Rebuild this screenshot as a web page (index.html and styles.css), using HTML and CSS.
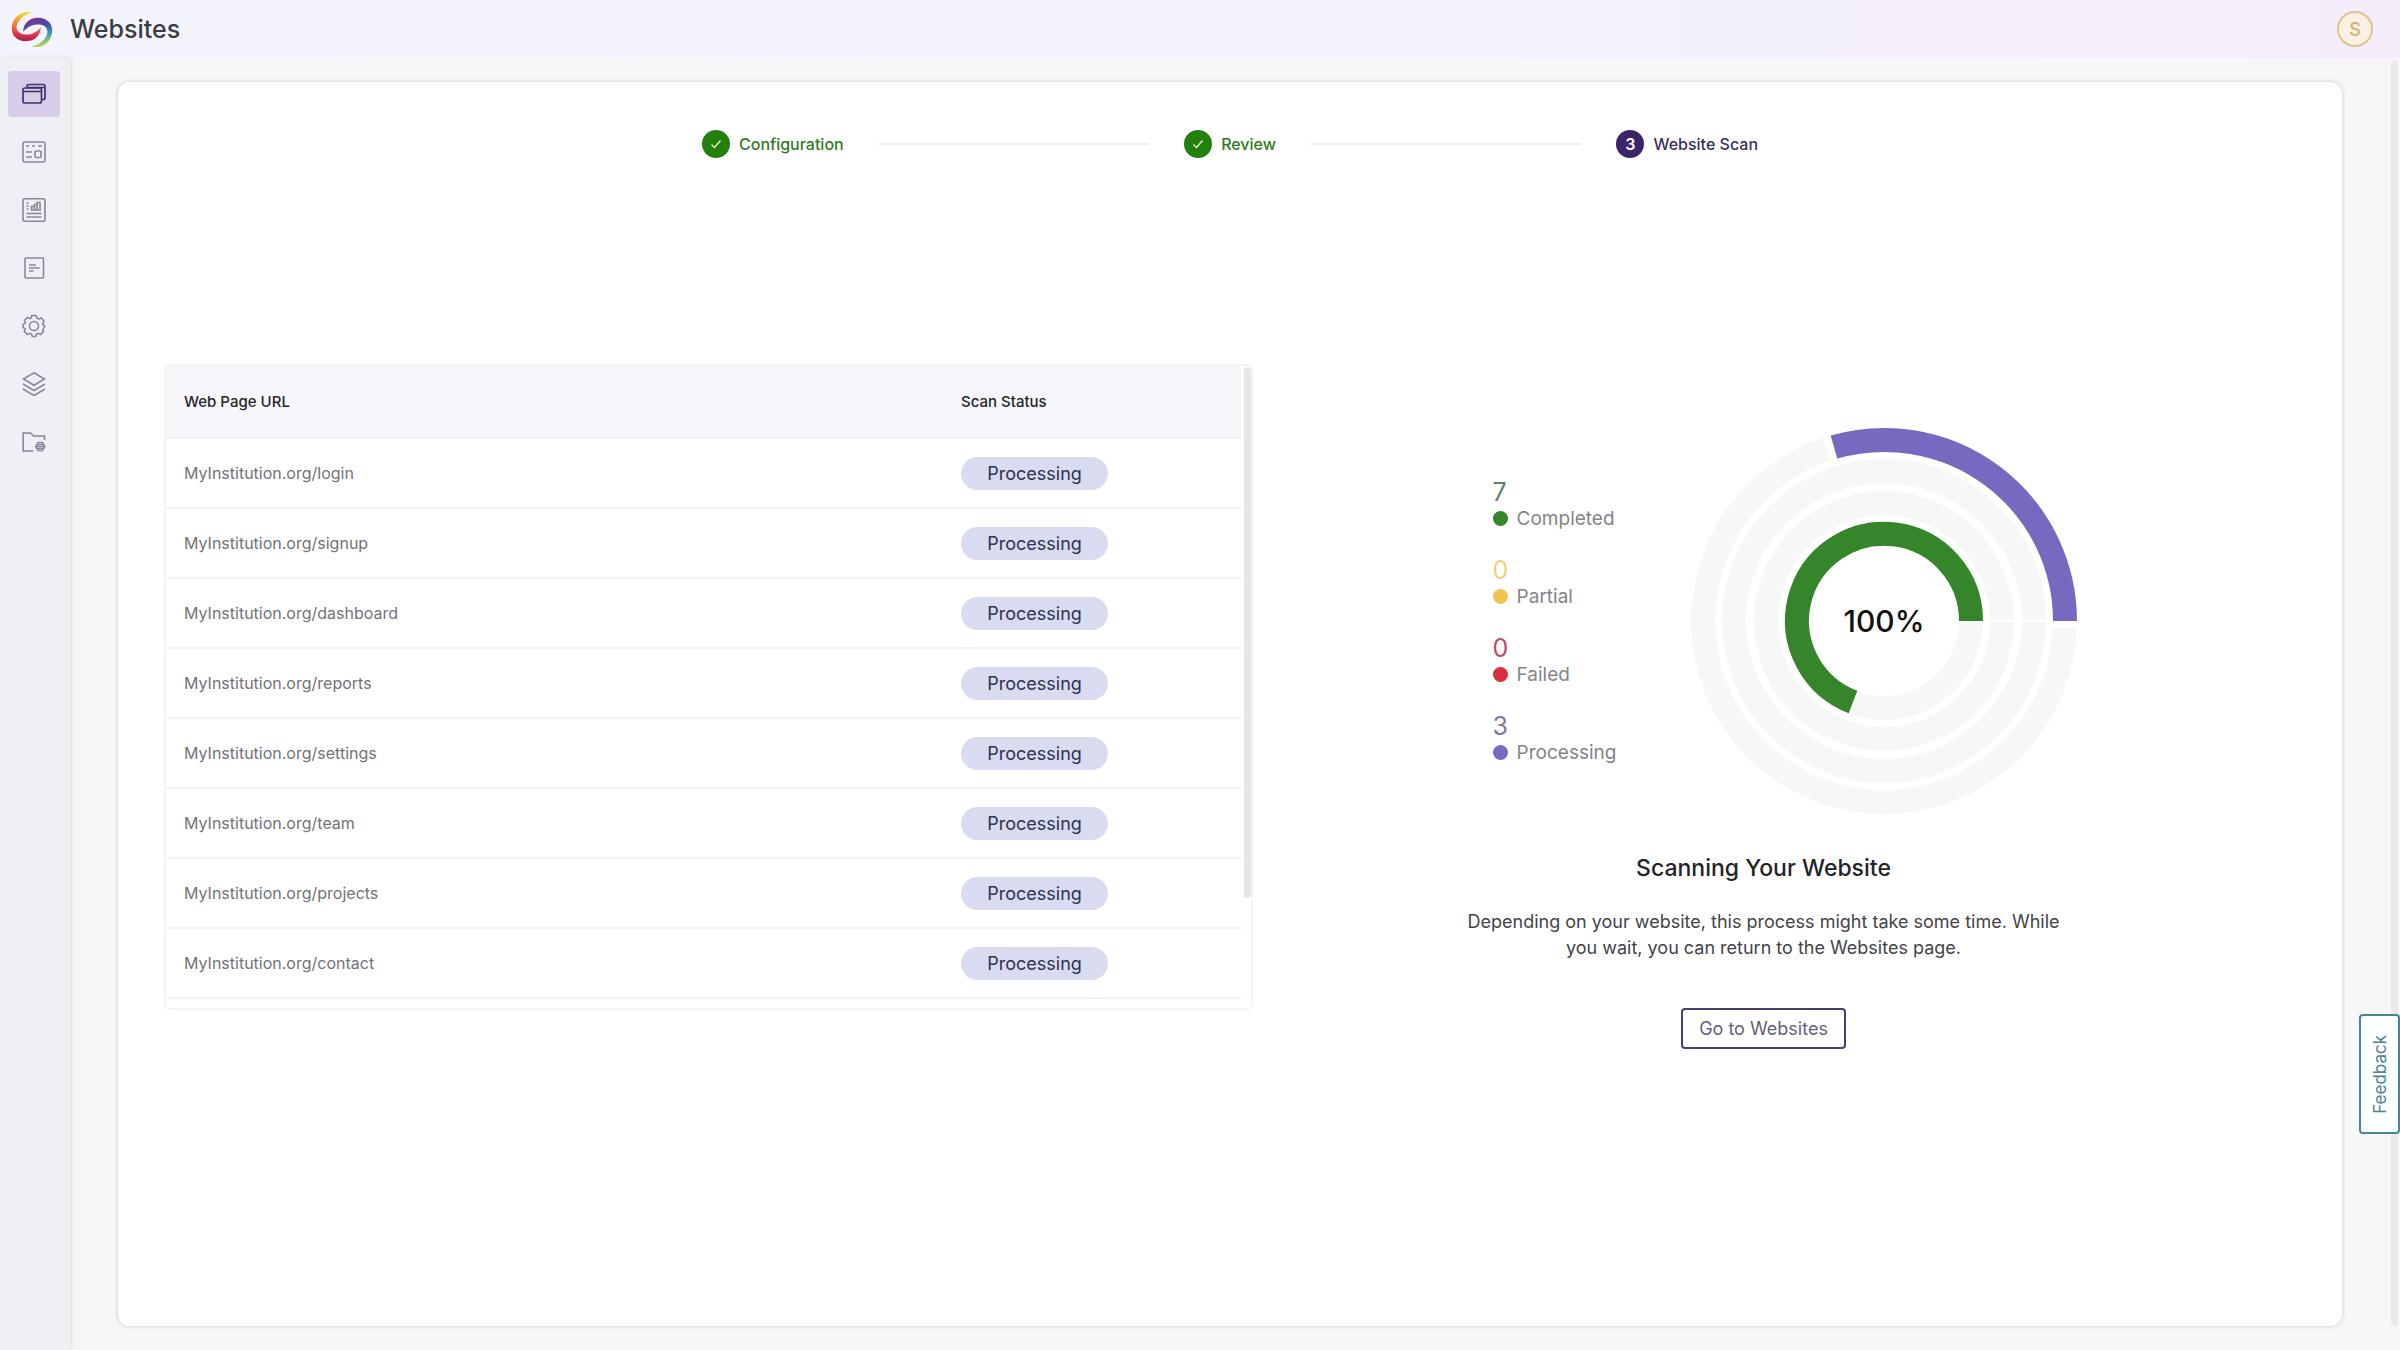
FILE: index.html
```html
<!DOCTYPE html>
<html lang="en">
<head>
    <meta charset="UTF-8">
    <meta name="viewport" content="width=device-width, initial-scale=1.0">
    <title>Websites</title>
    <link rel="stylesheet" href="styles.css">
</head>
<body>
<header class="topbar">
    <svg class="logo" viewBox="34 34 126 110" aria-hidden="true">
        <defs>
            <linearGradient id="warm" gradientUnits="userSpaceOnUse" x1="90" y1="36" x2="84" y2="124">
                <stop offset="0" stop-color="#f6dc3c"/>
                <stop offset="0.5" stop-color="#ee7a35"/>
                <stop offset="0.8" stop-color="#d8304a"/>
                <stop offset="1" stop-color="#a02450"/>
            </linearGradient>
            <linearGradient id="cool" gradientUnits="userSpaceOnUse" x1="90" y1="52" x2="116" y2="140">
                <stop offset="0" stop-color="#8c2d90"/>
                <stop offset="0.4" stop-color="#3f4fa8"/>
                <stop offset="0.7" stop-color="#3aa0c4"/>
                <stop offset="1" stop-color="#b4d84a"/>
            </linearGradient>
        </defs>
        <path fill="url(#warm)" d="M98 38C60 28 32 60 37 92C40 118 70 132 100 120C116 112 124 98 123 82C112 98 90 108 70 103C50 98 46 82 56 66C66 50 82 41 98 38Z"/>
        <path fill="url(#cool)" d="M96 140C134 150 162 118 157 86C154 60 124 46 94 58C78 66 70 80 71 96C82 80 104 70 124 75C144 80 148 96 138 112C128 128 112 137 96 140Z"/>
    </svg>
    <h1>Websites</h1>
    <button class="avatar" type="button" aria-label="Account">S</button>
</header>
<div class="page">
    <nav class="sidebar" aria-label="Main">
        <a class="nav-item active" href="#" aria-label="Websites">
            <svg viewBox="0 0 24 24"><path d="M5 5V4.500Q5 2.500 7 2.500H21Q23 2.500 23 4.500V15.500Q23 17.500 21 17.500H20M1 9.500H20M5 5.500H22"/><rect x="1" y="6" width="18.500" height="15" rx="2"/></svg>
        </a>
        <a class="nav-item" href="#" aria-label="Pages">
            <svg viewBox="0 0 24 24"><rect x="1" y="2" width="22" height="20" rx="2"/><path d="M4 6H7M10 6H13M16 6H20M4 12H10M4 17H10"/><rect x="13" y="11" width="6" height="6.500" rx="1"/></svg>
        </a>
        <a class="nav-item" href="#" aria-label="Reports">
            <svg viewBox="0 0 24 24"><rect x="1" y="0.800" width="22" height="22.400" rx="2"/><path d="M4.500 5H6.500M4.500 8H6.500M4.500 11H6.500M4.500 15.500H19.500M4.500 19H19.500M9.500 12V8.500H12.500V12M12.500 8.500V6.500H15V12M15 6V4.500H18V12M9 12H19"/></svg>
        </a>
        <a class="nav-item" href="#" aria-label="Documents">
            <svg viewBox="0 0 24 24"><rect x="3" y="2" width="18.500" height="20" rx="1"/><path d="M7 9H14M7 12H17.500M7 15H11.500"/></svg>
        </a>
        <a class="nav-item" href="#" aria-label="Settings">
            <svg viewBox="0 0 24 24"><path d="M9.800 1.500H14.200L15 4.200L17 5.100L19.300 3.800L22 7.500L20.600 9.600L21 11L22.800 12L21 15.500L21.500 17.500L18.500 20.500L16 19.300L14.500 20L13.800 22.500H10.200L9.500 20L8 19.300L5.500 20.500L2.500 17.500L3.400 15L1.200 13.500V10.500L3.400 9L2.500 6.500L5.500 3.500L8 4.700L9.200 4Z"/><circle cx="12" cy="12" r="4.500"/></svg>
        </a>
        <a class="nav-item" href="#" aria-label="Layers">
            <svg viewBox="0 0 24 24"><path d="M12 0.800L22.500 7L12 13.200L1.500 7ZM1 12L12 18.500L23 12M1 17L12 23.500L23 17"/></svg>
        </a>
        <a class="nav-item" href="#" aria-label="Folder settings">
            <svg viewBox="0 0 24 24"><path d="M11.500 21H1.200V3H8.500L11.500 6H22.500V10"/><path d="M16 12.500H20.500L22.800 16.500L20.500 20.500H16L13.700 16.500Z"/><path d="M14 16.500H22.500M15.500 14.500H21M15.500 18.500H21"/></svg>
        </a>
    </nav>
    <main class="content">
        <section class="card">
            <ol class="stepper">
                <li class="step done">
                    <span class="step-icon"><svg viewBox="0 0 14 14"><path d="M2.500 7.500L5.500 10.500L11.500 3.500"/></svg></span>
                    Configuration
                </li>
                <li class="step-line" aria-hidden="true"></li>
                <li class="step done">
                    <span class="step-icon"><svg viewBox="0 0 14 14"><path d="M2.500 7.500L5.500 10.500L11.500 3.500"/></svg></span>
                    Review
                </li>
                <li class="step-line" aria-hidden="true"></li>
                <li class="step current">
                    <span class="step-icon">3</span>
                    Website Scan
                </li>
            </ol>
            <div class="panels">
                <div class="table-box">
                    <table class="scan-table">
                        <thead>
                            <tr><th scope="col">Web Page URL</th><th scope="col">Scan Status</th></tr>
                        </thead>
                        <tbody>
                            <tr><td>MyInstitution.org/login</td><td><span class="pill">Processing</span></td></tr>
                            <tr><td>MyInstitution.org/signup</td><td><span class="pill">Processing</span></td></tr>
                            <tr><td>MyInstitution.org/dashboard</td><td><span class="pill">Processing</span></td></tr>
                            <tr><td>MyInstitution.org/reports</td><td><span class="pill">Processing</span></td></tr>
                            <tr><td>MyInstitution.org/settings</td><td><span class="pill">Processing</span></td></tr>
                            <tr><td>MyInstitution.org/team</td><td><span class="pill">Processing</span></td></tr>
                            <tr><td>MyInstitution.org/projects</td><td><span class="pill">Processing</span></td></tr>
                            <tr><td>MyInstitution.org/contact</td><td><span class="pill">Processing</span></td></tr>
                        </tbody>
                    </table>
                    <div class="table-scroll"></div>
                </div>
                <div class="scan-panel">
                    <div class="scan-summary">
                        <ul class="legend">
                            <li class="completed"><strong>7</strong><span>Completed</span></li>
                            <li class="partial"><strong>0</strong><span>Partial</span></li>
                            <li class="failed"><strong>0</strong><span>Failed</span></li>
                            <li class="processing"><strong>3</strong><span>Processing</span></li>
                        </ul>
                        <svg class="chart" viewBox="-194 -194 388 388" role="img" aria-label="Scan progress 100%">
                            <!-- tracks -->
                            <g class="track">
                                <circle r="181"/>
                                <circle r="150"/>
                                <circle r="118"/>
                                <circle r="87"/>
                            </g>
                            <path class="gap" d="M74 0H196"/>
                            <path class="gap wide" d="M168 3H196M-51 -162L-58 -186M-32 79L-40 97"/>
                            <!-- values -->
                            <path class="arc-processing" d="M181 0A181 181 0 0 0 -50 -174"/>
                            <path class="arc-completed" d="M87 0A87 87 0 1 0 -31 81"/>
                            <text y="11">100%</text>
                        </svg>
                    </div>
                    <h2>Scanning Your Website</h2>
                    <p>Depending on your website, this process might take some time. While you wait, you can return to the Websites page.</p>
                    <button class="back-button" type="button">Go to Websites</button>
                </div>
            </div>
        </section>
    </main>
    <div class="page-scroll"></div>
</div>
<button class="feedback" type="button">Feedback</button>
</body>
</html>
```

FILE: styles.css
```css
* {
    box-sizing: border-box;
}

body {
    margin: 0;
    min-height: 100vh;
    display: flex;
    flex-direction: column;
    font-family: Inter, "Liberation Sans", sans-serif;
    font-size: 18px;
    color: #444448;
    background-color: #f7f7f8;
}

button {
    font-family: inherit;
    cursor: pointer;
}

h1, h2, p, ul, ol {
    margin: 0;
    padding: 0;
}

ul, ol {
    list-style-type: none;
}

.topbar {
    display: flex;
    align-items: center;
    height: 58px;
    padding: 0 27px 0 11px;
    background: linear-gradient(90deg, #f3f4fd, #f4f2fc 60%, #f4ecfa);
}

.topbar h1 {
    margin-left: 17px;
    font-size: 25px;
    font-weight: 500;
    color: #3c3c44;
}

.logo {
    width: 42px;
    height: 37px;
}

.avatar {
    width: 36px;
    height: 36px;
    margin-left: auto;
    padding: 0;
    border: 2px solid #dcc58c;
    border-radius: 50%;
    background-color: #fcf0e4;
    color: #d4b46a;
    font-size: 18px;
    font-weight: 500;
}

.page {
    flex: 1;
    display: flex;
}

.sidebar {
    display: flex;
    flex-direction: column;
    align-items: center;
    gap: 12px;
    width: 70px;
    padding: 13px 2px 0 0;
    background-color: #eff0f6;
    box-shadow: 1px 0 5px rgba(0, 0, 0, 0.12);
}

.nav-item {
    display: flex;
    align-items: center;
    justify-content: center;
    width: 52px;
    height: 46px;
    border-radius: 4px;
}

.nav-item svg {
    width: 24px;
    height: 24px;
    fill: none;
    stroke: #8a869c;
    stroke-width: 1.6;
}

.nav-item.active {
    background-color: #d7cde8;
}

.nav-item.active svg {
    stroke: #43306e;
    stroke-width: 1.7;
}

.content {
    flex: 1;
    display: flex;
    padding: 24px 49px 24px 48px;
}

.card {
    flex: 1;
    padding: 48px 46px;
    border-radius: 12px;
    background-color: #fff;
    box-shadow: 0 0 5px rgba(0, 0, 0, 0.18);
}

.stepper {
    display: flex;
    align-items: center;
    gap: 35px;
    max-width: 1056px;
    margin: 0 auto;
}

.step {
    display: flex;
    align-items: center;
    gap: 9px;
    font-size: 16px;
    font-weight: 500;
}

.step-icon {
    display: flex;
    align-items: center;
    justify-content: center;
    width: 28px;
    height: 28px;
    border-radius: 50%;
    color: #fff;
    font-weight: 600;
}

.step-icon svg {
    width: 14px;
    height: 14px;
    fill: none;
    stroke: #e6f5e0;
    stroke-width: 1.3;
}

.step.done {
    color: #2f7d20;
}

.step.done .step-icon {
    background-color: #22800f;
}

.step.current {
    color: #3b2f5c;
}

.step.current .step-icon {
    background-color: #3c2468;
}

.step-line {
    flex: 1;
    height: 2px;
    background-color: #ececec;
}

.panels {
    display: grid;
    grid-template-columns: 1088fr 1020fr;
    align-items: start;
    margin-top: 206px;
    padding-right: 22px;
}

.table-box {
    display: flex;
    align-items: flex-start;
    height: 646px;
    border: 2px solid #f4f4f6;
    border-radius: 6px;
    overflow: hidden;
}

.scan-table {
    flex: 1;
    border-collapse: collapse;
    table-layout: fixed;
}

.scan-table th,
.scan-table td {
    height: 70px;
    padding: 0 18px;
    border-bottom: 2px solid #f2f2f4;
    text-align: left;
}

.scan-table th {
    height: 72px;
    background-color: #f7f7fb;
    font-size: 15px;
    font-weight: 500;
    color: #26262c;
}

.scan-table th:last-child {
    width: 298px;
}

.scan-table td {
    font-size: 16px;
    color: #737377;
}

.pill {
    display: block;
    width: 147px;
    border-radius: 17px;
    background-color: #d9dcf1;
    line-height: 33px;
    text-align: center;
    font-size: 18px;
    color: #2d3350;
}

.table-scroll {
    width: 7px;
    height: 531px;
    margin: 1px 0 0 3px;
    border-radius: 3px;
    background-color: #e7e7e8;
}

.scan-panel {
    display: flex;
    flex-direction: column;
    align-items: center;
    padding-top: 63px;
    text-align: center;
}

.scan-summary {
    display: flex;
    align-items: center;
    gap: 74px;
    padding-left: 44px;
}

.legend {
    display: flex;
    flex-direction: column;
    gap: 25px;
    padding-top: 2px;
    text-align: left;
}

.legend li {
    display: flex;
    flex-direction: column;
}

.legend strong {
    font-size: 25px;
    font-weight: 400;
    line-height: 27px;
}

.legend span {
    display: flex;
    align-items: center;
    gap: 9px;
    font-size: 19px;
    line-height: 26px;
    color: #858588;
}

.legend span::before {
    content: "";
    width: 15px;
    height: 15px;
    border-radius: 50%;
}

.completed strong {
    color: #62806a;
}

.completed span::before {
    background-color: #35852a;
}

.partial strong {
    color: #ecd27c;
}

.partial span::before {
    background-color: #efc44e;
}

.failed strong {
    color: #c24a62;
}

.failed span::before {
    background-color: #d8303f;
}

.processing strong {
    color: #7d7a9e;
}

.processing span::before {
    background-color: #7868c2;
}

.chart {
    width: 388px;
    height: 388px;
    fill: none;
    stroke-width: 24;
}

.track {
    stroke: #f7f7f7;
}

.gap {
    stroke: #fff;
    stroke-width: 2;
}

.gap.wide {
    stroke-width: 7;
}

.arc-processing {
    stroke: #7868c0;
}

.arc-completed {
    stroke: #35852a;
}

.chart text {
    fill: #111;
    font-size: 30px;
    font-weight: 500;
    text-anchor: middle;
}

.scan-panel h2 {
    margin-top: 36px;
    font-size: 23px;
    font-weight: 500;
    line-height: 34px;
    color: #242428;
}

.scan-panel p {
    max-width: 600px;
    margin-top: 24px;
    line-height: 26px;
}

.back-button {
    height: 41px;
    margin-top: 47px;
    padding: 0 16px;
    border: 2px solid #4c3c72;
    border-radius: 4px;
    background-color: #fff;
    color: #655f7a;
    font-size: 18px;
}

.page-scroll {
    width: 7px;
    margin: 2px 2px 24px 0;
    border-radius: 3px;
    background-color: #e9e9ea;
}

.feedback {
    position: fixed;
    right: 0;
    bottom: 216px;
    width: 41px;
    height: 120px;
    padding: 0;
    border: 2px solid #4a8490;
    border-radius: 4px;
    background-color: #fcffff;
    color: #54808c;
    font-size: 17px;
    writing-mode: sideways-lr;
}
```
